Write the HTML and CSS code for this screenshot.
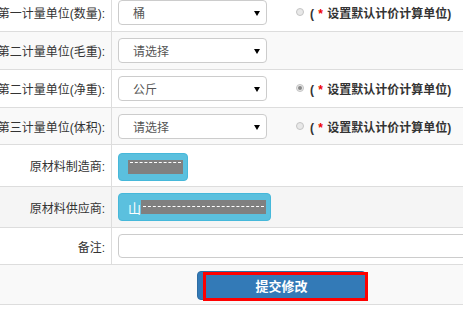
FILE: index.html
```html
<!DOCTYPE html>
<html lang="zh-CN">
<head>
    <meta charset="UTF-8">
    <meta name="viewport" content="width=device-width, initial-scale=1.0">
    <title>修改原材料</title>
    <link rel="stylesheet" href="styles.css">
</head>
<body>
    <div class="form-table">
        <div class="row">
            <div class="label">第一计量单位(数量):</div>
            <div class="field">
                <span class="select-wrap"><select><option>桶</option></select></span>
                <span class="radio"></span>
                <span class="hint">( <em>*</em> 设置默认计价计算单位)</span>
            </div>
        </div>
        <div class="row striped">
            <div class="label">第二计量单位(毛重):</div>
            <div class="field">
                <span class="select-wrap"><select><option>请选择</option></select></span>
            </div>
        </div>
        <div class="row">
            <div class="label">第二计量单位(净重):</div>
            <div class="field">
                <span class="select-wrap"><select><option>公斤</option></select></span>
                <span class="radio checked"></span>
                <span class="hint">( <em>*</em> 设置默认计价计算单位)</span>
            </div>
        </div>
        <div class="row striped short">
            <div class="label">第三计量单位(体积):</div>
            <div class="field">
                <span class="select-wrap"><select><option>请选择</option></select></span>
                <span class="radio"></span>
                <span class="hint">( <em>*</em> 设置默认计价计算单位)</span>
            </div>
        </div>
        <div class="row tall">
            <div class="label">原材料制造商:</div>
            <div class="field">
                <button class="btn-info"><span class="mask small"></span></button>
            </div>
        </div>
        <div class="row hover">
            <div class="label">原材料供应商:</div>
            <div class="field">
                <button class="btn-info">山<span class="mask wide"></span></button>
            </div>
        </div>
        <div class="row">
            <div class="label">备注:</div>
            <div class="field">
                <input type="text" class="remark">
            </div>
        </div>
        <div class="row striped submit-row">
            <button class="btn-primary">提交修改</button>
        </div>
    </div>
</body>
</html>
```

FILE: styles.css
```css
body {
    margin: 0;
    padding: 0;
    overflow: hidden;
    font-family: "Liberation Sans", "Noto Sans CJK SC", sans-serif;
    font-size: 12px;
    color: #333;
    background: #fff;
}
.form-table {
    width: 601px;
    margin: -6px 0 0 -19px;
}
.row {
    display: grid;
    grid-template-columns: 131px 1fr;
    border-bottom: 1px solid #ddd;
    background: #fff;
}
.row.striped {
    background: #f9f9f9;
}
.row.hover {
    background: #f5f5f5;
}
.label {
    display: flex;
    align-items: center;
    justify-content: flex-end;
    padding-right: 6px;
    border-right: 1px solid #ddd;
    white-space: nowrap;
}
.field {
    display: flex;
    align-items: center;
    padding: 6px 0 6px 6px;
}
.row.short .field {
    padding-bottom: 5px;
}
.row.tall .field {
    padding: 8px 0 5px 6px;
}
.select-wrap {
    position: relative;
    display: inline-block;
}
.select-wrap::after {
    content: "";
    position: absolute;
    right: 7px;
    top: 11px;
    border-left: 3px solid transparent;
    border-right: 3px solid transparent;
    border-top: 5px solid #000;
}
select {
    appearance: none;
    -webkit-appearance: none;
    width: 149px;
    height: 25px;
    padding: 3px 0 0 14px;
    border: 1px solid #ccc;
    border-radius: 4px;
    background: #fff;
    font-family: inherit;
    font-size: 12px;
    color: #555;
}
.radio {
    width: 6px;
    height: 6px;
    margin: 0 6px 2px 29px;
    border: 1px solid #c4c4c4;
    border-radius: 50%;
    background: #e8e8e8;
    position: relative;
}
.radio.checked::after {
    content: "";
    position: absolute;
    left: 1px;
    top: 1px;
    width: 4px;
    height: 4px;
    border-radius: 50%;
    background: #888;
}
.hint {
    font-weight: bold;
    color: #333;
    white-space: nowrap;
    word-spacing: 1px;
}
.hint em {
    font-style: normal;
    color: #e00;
}
.btn-info {
    display: inline-flex;
    align-items: center;
    height: 28px;
    padding: 0 4px 0 9px;
    border: 1px solid #46b8da;
    border-radius: 4px;
    background: #5bc0de;
    color: #fff;
    font-family: inherit;
    font-size: 13px;
}
.mask {
    display: inline-block;
    height: 14px;
    background: #808080;
    position: relative;
}
.mask::after {
    content: "";
    position: absolute;
    left: 2px;
    right: 2px;
    top: 6px;
    border-top: 1px dashed #fff;
}
.mask.small {
    width: 55px;
}
.mask.small::after {
    top: 2px;
}
.mask.wide {
    width: 125px;
}
.remark {
    width: 420px;
    height: 24px;
    box-sizing: border-box;
    border: 1px solid #ccc;
    border-radius: 4px;
    padding: 0 8px;
}
.submit-row {
    display: block;
    text-align: center;
    padding: 6px 0 4px;
}
.btn-primary {
    position: relative;
    width: 169px;
    height: 29px;
    border: 1px solid #2e6da4;
    border-radius: 4px;
    background: #337ab7;
    color: #fff;
    font-family: inherit;
    font-size: 13px;
    font-weight: bold;
    vertical-align: top;
}
.btn-primary::after {
    content: "";
    position: absolute;
    left: 5px;
    right: -3px;
    top: 0;
    bottom: -2px;
    border: 3px solid #f00;
}
```
